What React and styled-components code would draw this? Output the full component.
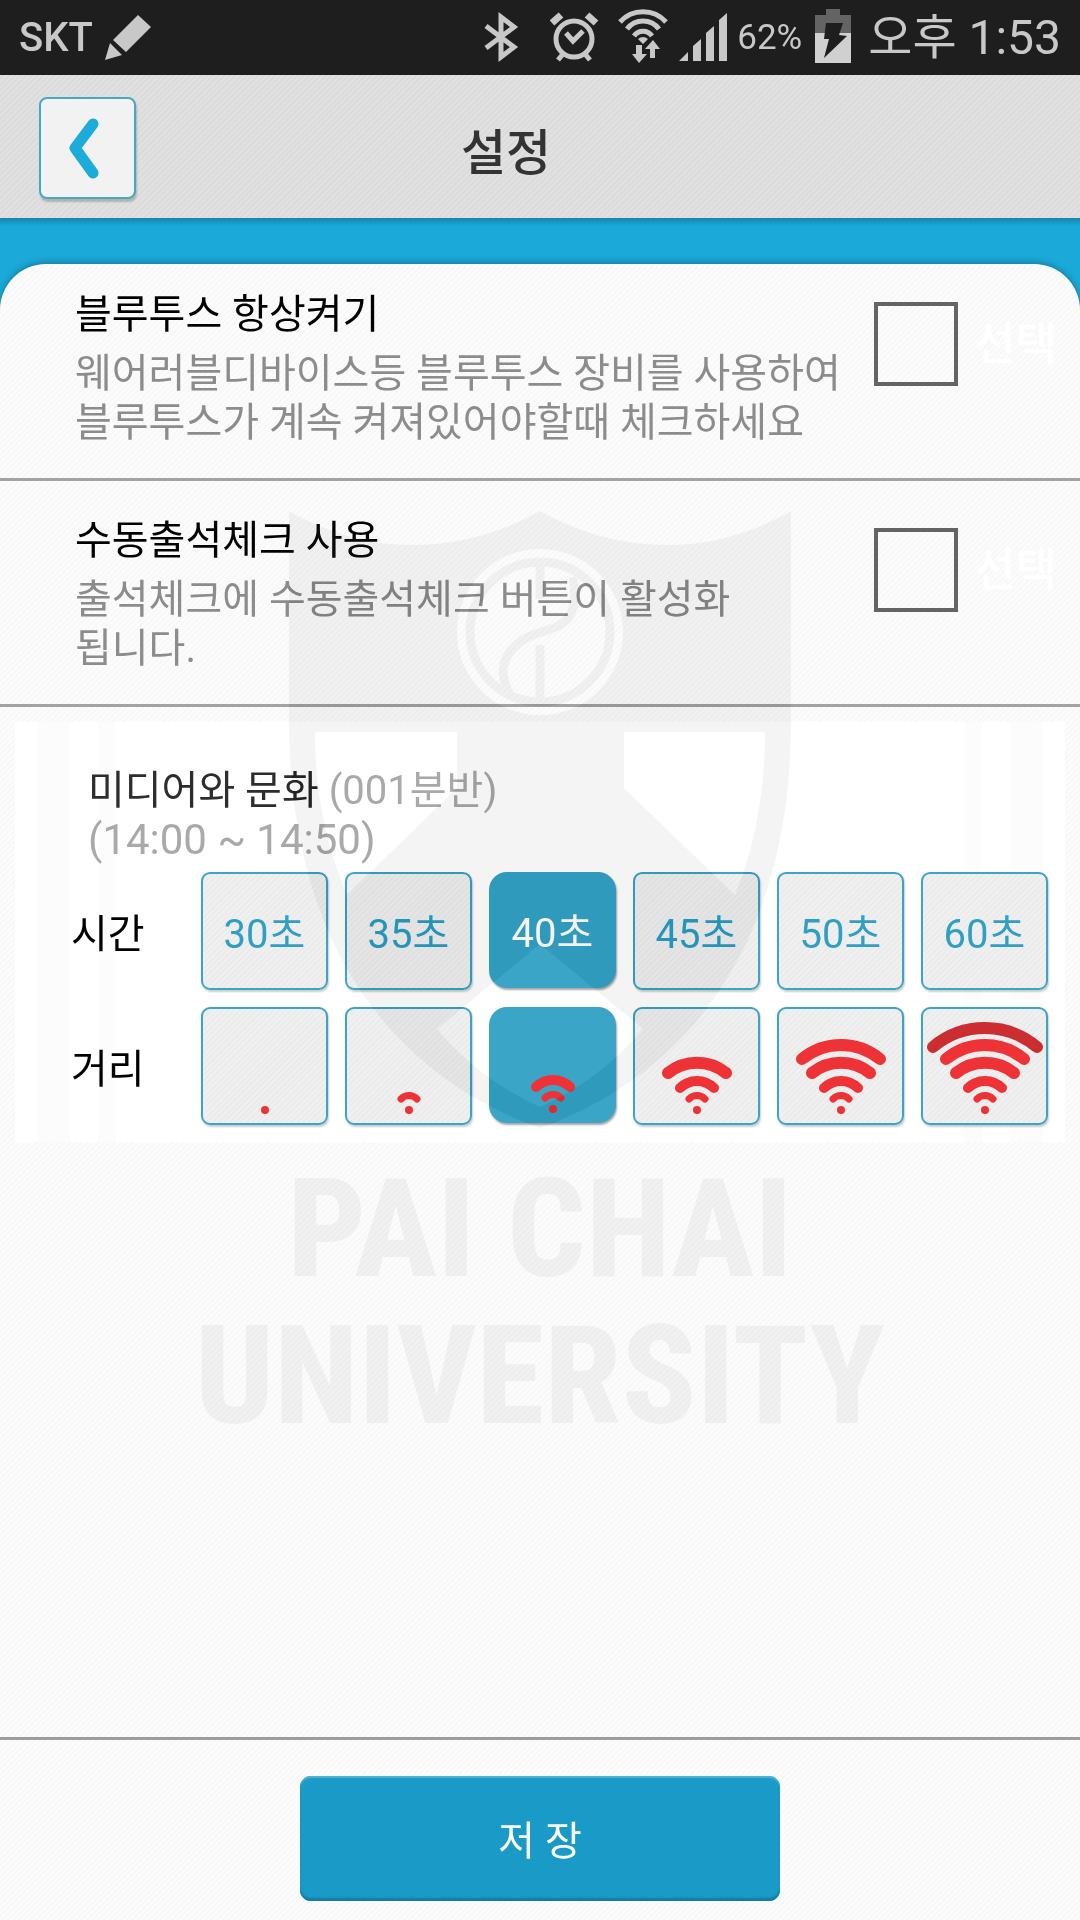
import React, { useState } from 'react'

import styled, { createGlobalStyle } from 'styled-components'

const TIMES = [30, 35, 40, 45, 50, 60]

// one arc more for every step of the distance
const ARCS = [
    { d: 'M52 83A11 11 0 0 1 68 83', width: 7 },
    { d: 'M43 72A24 24 0 0 1 77 72', width: 10 },
    { d: 'M31 57A46 46 0 0 1 89 57', width: 12 },
    { d: 'M21 43A61 61 0 0 1 99 43', width: 12 },
    { d: 'M8 31A81 81 0 0 1 112 31', width: 12 },
]

const OPTIONS = [
    {
        id: 'bluetooth',
        title: '블루투스 항상켜기',
        text: '웨어러블디바이스등 블루투스 장비를 사용하여 블루투스가 계속 켜져있어야할때 체크하세요',
    },
    {
        id: 'manual',
        title: '수동출석체크 사용',
        text: '출석체크에 수동출석체크 버튼이 활성화 됩니다.',
    },
]

function StatusIcons() {
    return (
        <>
            <svg width="56" height="75" fill="none" stroke="#c8c8c8" strokeWidth="5">
                <path d="M2 26L30 47L17 57V17L30 27L2 48" />
            </svg>
            <svg width="58" height="75" fill="none" stroke="#c8c8c8" strokeWidth="5">
                <circle cx="24" cy="39" r="18" />
                <path d="M16 33L23 41L33 31M8 60L13 54M40 60L35 54" />
                <path d="M2 23L11 15M46 23L37 15" strokeWidth="7" />
            </svg>
            <svg width="51" height="75" fill="none" stroke="#c8c8c8" strokeWidth="5">
                <path d="M2 22A31 31 0 0 1 48 22M9 29A20 20 0 0 1 41 29M16 36A11 11 0 0 1 34 36" />
                <path d="M20 39Q25 35 30 39L25 44ZM18 45H24V54H29L21 63L14 54H18ZM32 58V49H27L35 40L42 49H37V58Z" fill="#c8c8c8" stroke="none" />
            </svg>
            <svg width="48" height="75" fill="#c8c8c8">
                <path d="M0 61L9 52V61ZM14 61V46L22 39V61ZM27 61V33L35 26V61ZM40 61V20L48 13V61Z" />
            </svg>
        </>
    )
}

function Distance({ level }) {
    return (
        <svg width="120" height="100" viewBox="0 0 120 100" fill="none" stroke="#ee3236" strokeLinecap="round">
            <circle cx="60" cy="94" r="4" fill="#ee3236" stroke="none" />
            {ARCS.slice(0, level).map((arc, i) => (
                <path key={arc.d} d={arc.d} strokeWidth={arc.width} stroke={i === 4 ? '#cb2d31' : '#ee3236'} />
            ))}
        </svg>
    )
}

function Shield() {
    return (
        <svg width="502" height="620" viewBox="0 0 502 620">
            <path
                fill="#0b0b0b"
                fillRule="evenodd"
                d="M0 0Q60 34 123 34Q190 34 251 0Q312 34 379 34Q442 34 502 0V210C502 420 410 560 251 617C92 560 0 420 0 210Z
                M251 38A83 83 0 0 0 251 204A83 83 0 0 0 251 38Z
                M26 221H168V277L58 384Q26 310 26 221Z
                M476 221H335V277L446 384Q476 310 476 221Z
                M251 433L148 518Q190 568 251 596Q312 568 354 518Z"
            />
            <g fill="none" stroke="#0b0b0b" strokeWidth="9">
                <circle cx="251" cy="121" r="70" />
                <path d="M284 66C294 128 254 112 231 131C212 146 210 162 220 182M251 50V88M251 134V188" />
            </g>
        </svg>
    )
}

function App() {
    const [checked, setChecked] = useState({})
    const [time, setTime] = useState(40)
    const [distance, setDistance] = useState(2)

    return (
        <Page>
            <GlobalStyle />

            <StatusBar>
                <Carrier>SKT</Carrier>
                <svg width="46" height="75" fill="#c8c8c8">
                    <path d="M0 60L5 43L17 55ZM8 40L33 15L46 27L21 52Z" />
                </svg>
                <StatusRight>
                    <StatusIcons />
                    <Percent>62%</Percent>
                    <svg width="46" height="75">
                        <path d="M3 15H14V9H28V15H39V33H3Z" fill="#646464" />
                        <path d="M3 33H39V63H3Z" fill="#d0d0d0" />
                        <path d="M14 23H31L27 35L35 36L12 58L17 39H12Z" fill="#1e1e1e" />
                    </svg>
                    <Clock>오후 1:53</Clock>
                </StatusRight>
            </StatusBar>

            <Header>
                <BackButton aria-label="뒤로">
                    <svg width="40" height="70" fill="none" stroke="#1cabdb" strokeWidth="11" strokeLinecap="round" strokeLinejoin="round">
                        <path d="M25 11L7 35L25 60" />
                    </svg>
                </BackButton>
                <Title>설정</Title>
            </Header>

            <Stage>
                <Card>
                    {OPTIONS.map((option) => (
                        <Option key={option.id}>
                            <OptionText>
                                <OptionTitle>{option.title}</OptionTitle>
                                <Description>{option.text}</Description>
                            </OptionText>
                            <CheckLabel>
                                <Check
                                    type="checkbox"
                                    checked={!!checked[option.id]}
                                    onChange={(e) => setChecked({ ...checked, [option.id]: e.target.checked })}
                                />
                                선택
                            </CheckLabel>
                        </Option>
                    ))}

                    <Panel>
                        <Lecture>
                            미디어와 문화 <Muted>(001분반)</Muted>
                        </Lecture>
                        <Period>(14:00 ~ 14:50)</Period>

                        <Choices>
                            <ChoiceLabel>시간</ChoiceLabel>
                            {TIMES.map((t) => (
                                <Choice key={t} $active={t === time} aria-pressed={t === time} onClick={() => setTime(t)}>
                                    <ButtonText>{t}초</ButtonText>
                                </Choice>
                            ))}
                        </Choices>

                        <Choices>
                            <ChoiceLabel>거리</ChoiceLabel>
                            {TIMES.map((t, level) => (
                                <Choice
                                    key={t}
                                    $active={level === distance}
                                    aria-pressed={level === distance}
                                    aria-label={`거리 ${level + 1}`}
                                    onClick={() => setDistance(level)}
                                >
                                    <Distance level={level} />
                                </Choice>
                            ))}
                        </Choices>
                    </Panel>

                    <Watermark>
                        <Shield />
                        <School>PAI CHAI<br />UNIVERSITY</School>
                    </Watermark>
                </Card>
            </Stage>

            <Footer>
                <SaveButton>
                    <ButtonText>저 장</ButtonText>
                </SaveButton>
            </Footer>
        </Page>
    )
}

export default App

const GlobalStyle = createGlobalStyle`
* {
    box-sizing: border-box;
}

body {
    margin: 0;
    font-family: Roboto, "Noto Sans CJK KR", sans-serif;
    font-size: 40px;
    line-height: 49px;
    color: #000;
}

button {
    font: inherit;
    padding: 0;
    cursor: pointer;
}

svg {
    display: block;
    flex: none;
}
`

const Page = styled.div`
display: flex;
flex-direction: column;
min-height: 100vh;
background: repeating-linear-gradient(135deg, #fcfcfc 0 2px, #f8f8f8 2px 4px);
`

const StatusBar = styled.div`
display: flex;
align-items: center;
height: 75px;
padding: 0 19px;
background: #1e1e1e;
color: #c8c8c8;
`

const Carrier = styled.span`
font-weight: 500;
margin-right: 12px;
`

const StatusRight = styled.div`
display: flex;
align-items: center;
gap: 10px;
margin-left: auto;
`

const Percent = styled.span`
font-size: 35px;
`

const Clock = styled.span`
font-size: 48px;
`

const Header = styled.header`
display: flex;
align-items: center;
height: 143px;
padding: 3px 204px 0 39px;
background: repeating-linear-gradient(135deg, #e1e1e1 0 2px, #dbdbdb 2px 4px);
`

const BackButton = styled.button`
display: flex;
align-items: center;
justify-content: center;
width: 97px;
height: 102px;
border: 2px solid #45a9c6;
border-radius: 8px;
background: #f2f2f2;
box-shadow: 1px 3px 2px rgba(0, 0, 0, 0.2);
`

const Title = styled.h1`
flex: 1;
margin: 0;
padding-top: 10px;
font-size: 49px;
font-weight: 500;
text-align: center;
color: #333;
`

const Stage = styled.main`
flex: 1;
display: flex;
flex-direction: column;
padding-top: 46px;
background: linear-gradient(#1585ac, #1ba9d9 8px);
`

const Card = styled.div`
position: relative;
flex: 1;
border-radius: 46px 46px 0 0;
background: repeating-linear-gradient(135deg, #fcfcfc 0 2px, #f8f8f8 2px 4px);
box-shadow: 0 -2px 6px rgba(0, 0, 0, 0.25);
`

const Option = styled.section`
display: flex;
gap: 24px;
padding: 35px 23px 30px 75px;
border-bottom: 3px solid #a3a3a3;

&:first-child {
    padding-top: 26px;
}
`

const OptionText = styled.div`
flex: 1;
`

const OptionTitle = styled.h2`
margin: 0 0 10px;
font-size: 40px;
font-weight: 400;
`

const Description = styled.p`
margin: 0 0 1px;
color: #8c8c8c;
word-break: keep-all;
`

const CheckLabel = styled.label`
display: flex;
align-items: center;
align-self: flex-start;
gap: 16px;
margin-top: 12px;
font-size: 45px;
font-weight: 500;
color: #fff;
`

const Check = styled.input`
appearance: none;
width: 84px;
height: 84px;
margin: 0;
border: 4px solid #646464;

&:checked {
    background: #2f9fc3;
    box-shadow: inset 0 0 0 12px #fafafa;
}
`

const Panel = styled.section`
margin: 15px 15px 0;
padding: 44px 17px 17px 0;
background:
    linear-gradient(to right, transparent 23px, #fcfcfc 23px 55px, transparent 55px 83px, #fcfcfc 83px 101px, transparent 101px),
    linear-gradient(to left, transparent 23px, #fcfcfc 23px 55px, transparent 55px 83px, #fcfcfc 83px 101px, transparent 101px),
    #fff;
`

const Lecture = styled.h2`
margin: 0;
padding-left: 73px;
font-size: 40px;
font-weight: 400;
color: #2d2d2d;
`

const Muted = styled.span`
color: #a9a9a9;
`

const Period = styled.p`
margin: 0 0 8px;
padding-left: 73px;
font-size: 42px;
color: #a9a9a9;
`

const Choices = styled.div`
display: flex;
gap: 17px;
height: 118px;
padding-left: 56px;

& + & {
    margin-top: 17px;
}
`

const ChoiceLabel = styled.span`
width: 113px;
align-self: center;
padding-top: 6px;
`

const Choice = styled.button`
flex: 1;
display: flex;
align-items: center;
justify-content: center;
border: 2px solid #3ba5c4;
border-radius: 9px;
background: repeating-linear-gradient(135deg, #f0f0f0 0 2px, #ebebeb 2px 4px);
box-shadow: 1px 2px 2px rgba(0, 0, 0, 0.2);
color: #2f9fc3;

${(props) => props.$active && `
    margin-bottom: 2px;
    border-color: #3ba5c8;
    border-radius: 18px;
    background: #3ba5c8;
    box-shadow: 1px 2px 2px rgba(0, 0, 0, 0.35);
    color: #fff;
`}
`

const ButtonText = styled.span`
display: block;
padding-top: 6px;
`

// subtracts its colour from whatever lies below
const Watermark = styled.div`
position: absolute;
inset: 0;
display: flex;
flex-direction: column;
align-items: center;
padding-top: 247px;
overflow: hidden;
mix-blend-mode: difference;
pointer-events: none;
`

const School = styled.p`
margin: 25px 0 0;
font-family: "Liberation Sans Narrow", "Roboto Condensed", "DejaVu Sans Condensed", sans-serif;
font-size: 138px;
font-weight: 800;
line-height: 147px;
text-align: center;
color: #0b0b0b;
`

const Footer = styled.footer`
padding: 36px 0 19px;
border-top: 3px solid #a3a3a3;
`

const SaveButton = styled.button`
display: flex;
align-items: center;
justify-content: center;
width: 480px;
height: 125px;
margin: 0 auto;
border: 0;
border-radius: 11px;
background: #1a9bc7;
box-shadow: inset 0 2px 1px #4fb4d4, inset 0 -3px 2px #127da2;
color: #fff;
`
